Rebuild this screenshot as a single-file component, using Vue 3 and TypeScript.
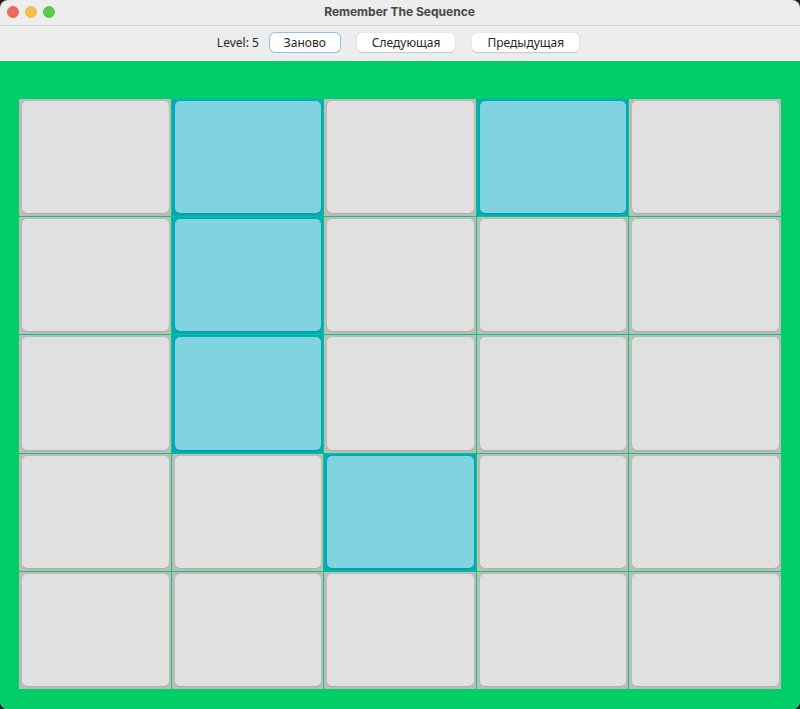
<script setup lang="ts">
import { ref } from 'vue'

const level = ref(5)
const size = 5
const initial = [1, 3, 6, 11, 17]
const lit = ref<number[]>([...initial])

function toggle(index: number): void {
  lit.value = lit.value.includes(index)
    ? lit.value.filter((i) => i !== index)
    : [...lit.value, index]
}

function restart(): void {
  lit.value = [...initial]
}

function next(): void {
  level.value += 1
}

function previous(): void {
  level.value = Math.max(1, level.value - 1)
}
</script>

<template>
  <div class="window">
    <header class="titlebar">
      <div class="lights">
        <span class="light close"></span>
        <span class="light minimize"></span>
        <span class="light maximize"></span>
      </div>
      <h1 class="title">Remember The Sequence</h1>
    </header>
    <nav class="toolbar">
      <span class="level">Level: {{ level }}</span>
      <div class="actions">
        <button type="button" class="action primary" @click="restart">Заново</button>
        <button type="button" class="action" @click="next">Следующая</button>
        <button type="button" class="action" @click="previous">Предыдущая</button>
      </div>
    </nav>
    <main class="board">
      <button
        v-for="n in size * size"
        :key="n"
        type="button"
        class="cell"
        :class="{ lit: lit.includes(n - 1) }"
        :aria-label="`${n}`"
        :aria-pressed="lit.includes(n - 1)"
        @click="toggle(n - 1)"
      >
        <span class="face"></span>
      </button>
    </main>
  </div>
</template>

<style>
body {
  background: #222;
}
</style>

<style scoped>
.window {
  display: flex;
  flex-direction: column;
  min-height: 100vh;
  overflow: hidden;
  border-radius: 8px;
  background: #ededed;
  font-family: "Noto Sans", "Open Sans", sans-serif;
}

.titlebar {
  display: grid;
  grid-template-columns: 1fr auto 1fr;
  align-items: center;
  box-sizing: border-box;
  height: 26px;
  padding: 0 8px 2px 7px;
  border-bottom: 1px solid #d7d7d7;
}

.lights {
  display: flex;
  gap: 6px;
}

.light {
  box-sizing: border-box;
  width: 12px;
  height: 12px;
  border: 1px solid #e5665b;
  border-radius: 50%;
  background: #ec6a5e;
}

.minimize {
  border-color: #ebb74c;
  background: #f4bf4f;
}

.maximize {
  border-color: #5fbf51;
  background: #61c554;
}

.title {
  margin: 0;
  color: #464646;
  font: 700 12px/16px Inter, "Liberation Sans", sans-serif;
}

.toolbar {
  display: flex;
  align-items: center;
  justify-content: center;
  gap: 11px;
  box-sizing: border-box;
  height: 35px;
  padding-right: 4px;
  color: #262626;
  font-size: 12px;
  line-height: 18px;
}

.level {
  padding-bottom: 1px;
}

.actions {
  display: flex;
  gap: 17px;
  padding-bottom: 2px;
}

.action {
  height: 19px;
  margin: 0;
  padding: 0 15px;
  border: 0;
  border-radius: 5px;
  outline: none;
  background: #fff;
  box-shadow: 0 1px 1px #c8c8c8, 0 0 1px #c8c8c8;
  color: #262626;
  font: inherit;
}

.primary {
  padding: 0 14px;
  box-shadow: 0 0 0 1px #94bdf0;
}

.board {
  display: grid;
  flex: 1;
  grid-template-columns: repeat(5, 1fr);
  grid-auto-rows: 1fr;
  gap: 1px;
  padding: 38px 19px 20px;
  background: #00ce66;
}

.cell {
  display: flex;
  min-height: 60px;
  padding: 2px 2px 3px 3px;
  border: 0;
  background: #bcbcbc;
}

.face {
  flex: 1;
  align-self: stretch;
  border-radius: 5px;
  background: #e0e0e0;
  box-shadow: 0 1px 1px #adadad;
}

.lit {
  background: #02a9bf;
}

.lit .face {
  background: #80d3df;
  box-shadow: 0 1px 1px #0698ac;
}
</style>
